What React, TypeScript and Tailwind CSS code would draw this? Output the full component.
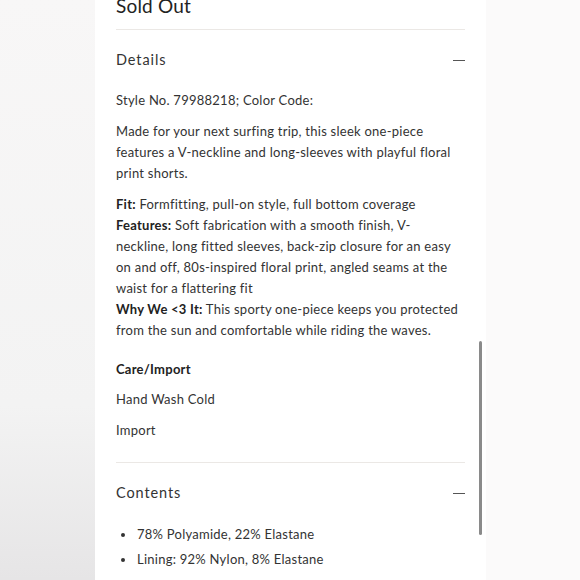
import React from "react";

const Minus = () => <span className="block h-px w-[12px] bg-[#555]" />;

const SectionHeader: React.FC<{ title: string; className?: string }> = ({ title, className }) => (
  <div className={`flex items-center justify-between ${className ?? ""}`}>
    <h2 className="text-[14.5px] leading-[20px] tracking-[0.9px] text-[#333]">{title}</h2>
    <Minus />
  </div>
);

export default function App() {
  return (
    <div className="flex h-[580px] w-full overflow-hidden font-['Lato',sans-serif]">
      {/* blurred backdrop, left */}
      <div className="w-[95px] bg-linear-to-b from-[#f8f7f7] via-[#f3f3f3] via-70% to-[#e6e5e6]" />

      {/* product details panel */}
      <div className="relative w-[391px] bg-white">
        <div className="-mt-[8px] px-[21px]">
          <div className="border-b border-[#ebe8e5] pb-[9px]">
            <p className="text-[19px] leading-[28px] tracking-[0.2px] text-[#222]">Sold Out</p>
          </div>

          {/* Details */}
          <div className="border-b border-[#ebe8e5] pb-[21px]">
            <SectionHeader title="Details" className="pt-[20px] pb-[20px]" />
            <div className="text-[13px] leading-[21px] tracking-[0.25px] text-[#333]">
              <p>Style No. 79988218; Color Code:</p>
              <p className="mt-[10px]">
                Made for your next surfing trip, this sleek one-piece
                <br />
                features a V-neckline and long-sleeves with playful floral
                <br />
                print shorts.
              </p>
              <p className="mt-[10px]">
                <b className="font-bold text-[#222]">Fit:</b> Formfitting, pull-on style, full bottom coverage
                <br />
                <b className="font-bold text-[#222]">Features:</b> Soft fabrication with a smooth finish, V-
                <br />
                neckline, long fitted sleeves, back-zip closure for an easy
                <br />
                on and off, 80s-inspired floral print, angled seams at the
                <br />
                waist for a flattering fit
                <br />
                <b className="font-bold text-[#222]">Why We &lt;3 It:</b> This sporty one-piece keeps you protected
                <br />
                from the sun and comfortable while riding the waves.
              </p>
              <p className="mt-[18px] font-bold text-[#222]">Care/Import</p>
              <p className="mt-[9px]">Hand Wash Cold</p>
              <p className="mt-[10px]">Import</p>
            </div>
          </div>

          {/* Contents */}
          <SectionHeader title="Contents" className="pt-[20px] pb-[21px]" />
          <ul className="flex flex-col gap-[4px] text-[13px] leading-[21px] tracking-[0.25px] text-[#333]">
            {["78% Polyamide, 22% Elastane", "Lining: 92% Nylon, 8% Elastane"].map((item) => (
              <li key={item} className="flex items-center">
                <span className="ml-[5px] mr-[12px] h-[4px] w-[4px] rounded-full bg-[#333]" />
                {item}
              </li>
            ))}
          </ul>
        </div>

        {/* scrollbar thumb */}
        <div className="absolute top-[341px] left-[384px] h-[194px] w-[3px] rounded-full bg-[#8a8a8a]" />
      </div>

      {/* blurred backdrop, right */}
      <div className="flex-1 bg-[#fbfafa]" />
    </div>
  );
}
